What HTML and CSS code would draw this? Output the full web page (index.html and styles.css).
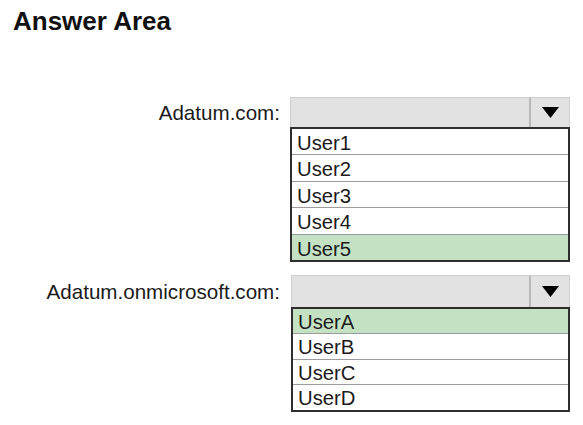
FILE: index.html
```html
<!DOCTYPE html>
<html>
<head>
<meta charset="utf-8">
<link rel="stylesheet" href="styles.css">
</head>
<body>
<div class="page">
  <h1 class="title">Answer Area</h1>
  <div class="form">
    <div class="field field-one">
      <div class="label">Adatum.com:</div>
      <div class="dropdown">
        <div class="select">
          <div class="select-value"></div>
          <div class="select-arrow"><svg width="17" height="11" viewBox="0 0 17 11"><path d="M0 0H17L8.5 11Z" fill="#000"/></svg></div>
        </div>
        <ul class="options">
          <li class="option">User1</li>
          <li class="option">User2</li>
          <li class="option">User3</li>
          <li class="option">User4</li>
          <li class="option selected">User5</li>
        </ul>
      </div>
    </div>
    <div class="field field-two">
      <div class="label">Adatum.onmicrosoft.com:</div>
      <div class="dropdown">
        <div class="select">
          <div class="select-value"></div>
          <div class="select-arrow"><svg width="17" height="11" viewBox="0 0 17 11"><path d="M0 0H17L8.5 11Z" fill="#000"/></svg></div>
        </div>
        <ul class="options">
          <li class="option selected">UserA</li>
          <li class="option">UserB</li>
          <li class="option">UserC</li>
          <li class="option">UserD</li>
        </ul>
      </div>
    </div>
  </div>
</div>
</body>
</html>
```
FILE: styles.css
```css
html, body {
  margin: 0;
  padding: 0;
  background: #ffffff;
}
.page {
  font-family: "Liberation Sans", Arial, sans-serif;
  color: #1b1b1b;
  padding: 5px 0 0 13px;
}
.title {
  margin: 0;
  font-size: 26px;
  font-weight: bold;
  line-height: 32px;
  color: #111;
}
.form {
  display: flex;
  flex-direction: column;
  gap: 13px;
  margin-top: 60px;
}
.field {
  display: flex;
  align-items: flex-start;
}
.label {
  width: 267px;
  text-align: right;
  font-size: 20.6px;
  padding-right: 10px;
  line-height: 31px;
}
.field-two .label {
  line-height: 34px;
}
.dropdown {
  width: 280px;
}
.select {
  display: flex;
  height: 30px;
  box-sizing: border-box;
  border: 1px solid #cfcfcf;
  border-bottom: none;
  background: #e2e2e2;
}
.field-two .select {
  height: 32px;
  margin-left: 1px;
}
.select-value {
  flex: 1;
}
.select-arrow {
  width: 38px;
  border-left: 2px solid #b9b9b9;
  display: flex;
  align-items: center;
  justify-content: center;
}
.options {
  list-style: none;
  margin: 0;
  padding: 0;
  border: 2px solid #2e2e2e;
  background: #fff;
}
.field-two .options {
  margin-left: 1px;
}
.option {
  font-size: 20.3px;
  height: 25.4px;
  line-height: 28px;
  padding-left: 5px;
  border-top: 1px solid #9c9c9c;
  overflow: hidden;
}
.field-two .option {
  height: 24.5px;
  line-height: 27px;
}
.option:first-child {
  border-top: none;
}
.option.selected {
  background: #c5e1c4;
}
```
